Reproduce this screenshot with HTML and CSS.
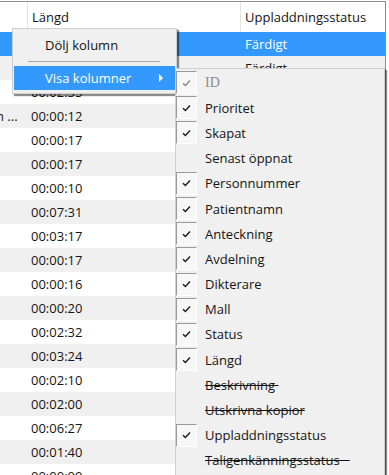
FILE: index.html
```html
<!DOCTYPE html>
<html lang="sv">
<head>
<meta charset="utf-8">
<title>Kolumner</title>
<link rel="stylesheet" href="styles.css">
</head>
<body>
<div class="grid">
  <div class="hdr">
    <div class="c1"></div>
    <div class="c2">Längd</div>
    <div class="c3">Uppladdningsstatus</div>
  </div>
  <div class="row sel"><div class="c1"></div><div class="c2"></div><div class="c3">Färdigt</div></div>
  <div class="row"><div class="c1"></div><div class="c2"></div><div class="c3">Färdigt</div></div>
  <div class="row"><div class="c1"></div><div class="c2">00:02:35</div><div class="c3"></div></div>
  <div class="row"><div class="c1"><span>n ...</span></div><div class="c2">00:00:12</div><div class="c3"></div></div>
  <div class="row"><div class="c1"></div><div class="c2">00:00:17</div><div class="c3"></div></div>
  <div class="row"><div class="c1"></div><div class="c2">00:00:17</div><div class="c3"></div></div>
  <div class="row"><div class="c1"></div><div class="c2">00:00:10</div><div class="c3"></div></div>
  <div class="row"><div class="c1"></div><div class="c2">00:07:31</div><div class="c3"></div></div>
  <div class="row"><div class="c1"></div><div class="c2">00:03:17</div><div class="c3"></div></div>
  <div class="row"><div class="c1"></div><div class="c2">00:00:17</div><div class="c3"></div></div>
  <div class="row"><div class="c1"></div><div class="c2">00:00:16</div><div class="c3"></div></div>
  <div class="row"><div class="c1"></div><div class="c2">00:00:20</div><div class="c3"></div></div>
  <div class="row"><div class="c1"></div><div class="c2">00:02:32</div><div class="c3"></div></div>
  <div class="row"><div class="c1"></div><div class="c2">00:03:24</div><div class="c3"></div></div>
  <div class="row"><div class="c1"></div><div class="c2">00:02:10</div><div class="c3"></div></div>
  <div class="row"><div class="c1"></div><div class="c2">00:02:00</div><div class="c3"></div></div>
  <div class="row"><div class="c1"></div><div class="c2">00:06:27</div><div class="c3"></div></div>
  <div class="row"><div class="c1"></div><div class="c2">00:01:40</div><div class="c3"></div></div>
  <div class="row"><div class="c1"></div><div class="c2">00:00:09</div><div class="c3"></div></div>
</div>

<div class="menu">
  <div class="mi">Dölj kolumn</div>
  <div class="sep"></div>
  <div class="mi hot">Visa kolumner<span class="arrow"></span></div>
</div>

<div class="submenu">
  <div class="si dis"><span class="chk"><svg viewBox="0 0 9 8" width="9" height="8"><path d="M1 4.2 L3.4 6.5 L8 1.5" /></svg></span><span class="lbl serif">ID</span></div>
  <div class="si"><span class="chk"><svg viewBox="0 0 9 8" width="9" height="8"><path d="M1 4.2 L3.4 6.5 L8 1.5" /></svg></span><span class="lbl">Prioritet</span></div>
  <div class="si"><span class="chk"><svg viewBox="0 0 9 8" width="9" height="8"><path d="M1 4.2 L3.4 6.5 L8 1.5" /></svg></span><span class="lbl">Skapat</span></div>
  <div class="si"><span class="nochk"></span><span class="lbl">Senast öppnat</span></div>
  <div class="si"><span class="chk"><svg viewBox="0 0 9 8" width="9" height="8"><path d="M1 4.2 L3.4 6.5 L8 1.5" /></svg></span><span class="lbl">Personnummer</span></div>
  <div class="si"><span class="chk"><svg viewBox="0 0 9 8" width="9" height="8"><path d="M1 4.2 L3.4 6.5 L8 1.5" /></svg></span><span class="lbl">Patientnamn</span></div>
  <div class="si"><span class="chk"><svg viewBox="0 0 9 8" width="9" height="8"><path d="M1 4.2 L3.4 6.5 L8 1.5" /></svg></span><span class="lbl">Anteckning</span></div>
  <div class="si"><span class="chk"><svg viewBox="0 0 9 8" width="9" height="8"><path d="M1 4.2 L3.4 6.5 L8 1.5" /></svg></span><span class="lbl">Avdelning</span></div>
  <div class="si"><span class="chk"><svg viewBox="0 0 9 8" width="9" height="8"><path d="M1 4.2 L3.4 6.5 L8 1.5" /></svg></span><span class="lbl">Dikterare</span></div>
  <div class="si"><span class="chk"><svg viewBox="0 0 9 8" width="9" height="8"><path d="M1 4.2 L3.4 6.5 L8 1.5" /></svg></span><span class="lbl">Mall</span></div>
  <div class="si"><span class="chk"><svg viewBox="0 0 9 8" width="9" height="8"><path d="M1 4.2 L3.4 6.5 L8 1.5" /></svg></span><span class="lbl">Status</span></div>
  <div class="si"><span class="chk"><svg viewBox="0 0 9 8" width="9" height="8"><path d="M1 4.2 L3.4 6.5 L8 1.5" /></svg></span><span class="lbl">Längd</span></div>
  <div class="si"><span class="nochk"></span><span class="lbl strike">Beskrivning&nbsp;</span></div>
  <div class="si"><span class="nochk"></span><span class="lbl strike">Utskrivna kopior</span></div>
  <div class="si"><span class="chk"><svg viewBox="0 0 9 8" width="9" height="8"><path d="M1 4.2 L3.4 6.5 L8 1.5" /></svg></span><span class="lbl">Uppladdningsstatus</span></div>
  <div class="si"><span class="nochk"></span><span class="lbl strike">Taligenkänningsstatus&nbsp;&nbsp;&nbsp;</span></div>
</div>
</body>
</html>
```

FILE: styles.css
```css
html, body {
  margin: 0;
  padding: 0;
  background: #ffffff;
}

body {
  font-family: "Open Sans", "Noto Sans", "Liberation Sans", sans-serif;
  font-size: 13px;
  color: #141414;
  padding-top: 1px;
  overflow: hidden;
  height: 474px;
}

.grid {
  width: 385px;
  border-top: 1px solid #8c8c8c;
  border-right: 1px solid #8c8c8c;
}

.hdr {
  display: flex;
  height: 30px;
  align-items: stretch;
  background: #ffffff;
}

.hdr > div {
  display: flex;
  align-items: center;
  white-space: nowrap;
  overflow: hidden;
}

.hdr .c1 {
  width: 27px;
  border-right: 1px solid #e3e3e3;
}

.hdr .c2 {
  width: 208px;
  padding-left: 4px;
  border-right: 1px solid #e3e3e3;
}

.hdr .c3 {
  flex: 1;
  padding-left: 4px;
}

.row {
  display: flex;
  height: 24px;
  line-height: 24px;
  background: #ffffff;
  white-space: nowrap;
}

.row:nth-child(odd) {
  background: #f0f0f0;
}

.row.sel {
  background: #3399ff;
  color: #ffffff;
}

.row .c1 {
  width: 28px;
  flex: none;
  overflow: hidden;
  display: flex;
  justify-content: flex-start;
  box-sizing: border-box;
}

.row .c1 span {
  flex: none;
  margin-left: -4px;
}

.row .c2 {
  width: 213px;
  flex: none;
  padding-left: 3px;
  box-sizing: border-box;
}

.row .c3 {
  flex: 1;
  padding-left: 4px;
}

/* context menu */
.menu {
  position: absolute;
  left: 12px;
  top: 28px;
  width: 161px;
  padding: 4px 1px 3px 1px;
  background: #f0f0f0;
  border: 1px solid #cfcfcf;
  box-shadow: 2px 2px 1px rgba(0, 0, 0, 0.45);
}

.mi {
  position: relative;
  height: 24px;
  line-height: 24px;
  padding-left: 31px;
  white-space: nowrap;
}

.mi.hot {
  background: #3399ff;
  color: #ffffff;
}

.sep {
  height: 1px;
  margin: 4px 15px 4px 14px;
  background: #a8a8a8;
}

.arrow {
  position: absolute;
  left: 145px;
  top: 8px;
  width: 0;
  height: 0;
  border-top: 4px solid transparent;
  border-bottom: 4px solid transparent;
  border-left: 4px solid #ffffff;
}

/* submenu */
.submenu {
  position: absolute;
  left: 175px;
  top: 68px;
  width: 208px;
  padding: 1px 0 2px 0;
  background: #f0f0f0;
  border: 1px solid #cfcfcf;
  box-shadow: 2px 2px 1px rgba(0, 0, 0, 0.45);
}

.si {
  display: flex;
  align-items: center;
  height: 25.2px;
  white-space: nowrap;
}

.chk, .nochk {
  width: 21px;
  height: 23px;
  flex: none;
  box-sizing: border-box;
  display: flex;
  align-items: center;
  justify-content: center;
}

.chk {
  background: #f7f7f7;
  border-left: 1px solid #9a9a9a;
  border-top: 1px solid #9a9a9a;
  border-right: 1px solid #ffffff;
  border-bottom: 1px solid #ffffff;
}

.chk svg path {
  fill: none;
  stroke: #1a1a1a;
  stroke-width: 1.4;
}

.dis .chk svg path {
  stroke: #8a8a8a;
}

.lbl {
  padding-left: 8px;
}

.dis .lbl {
  color: #8d8d8d;
}

.serif {
  font-family: "Liberation Serif", "DejaVu Serif", serif;
  font-size: 14px;
}

.strike {
  text-decoration: line-through;
}
```
